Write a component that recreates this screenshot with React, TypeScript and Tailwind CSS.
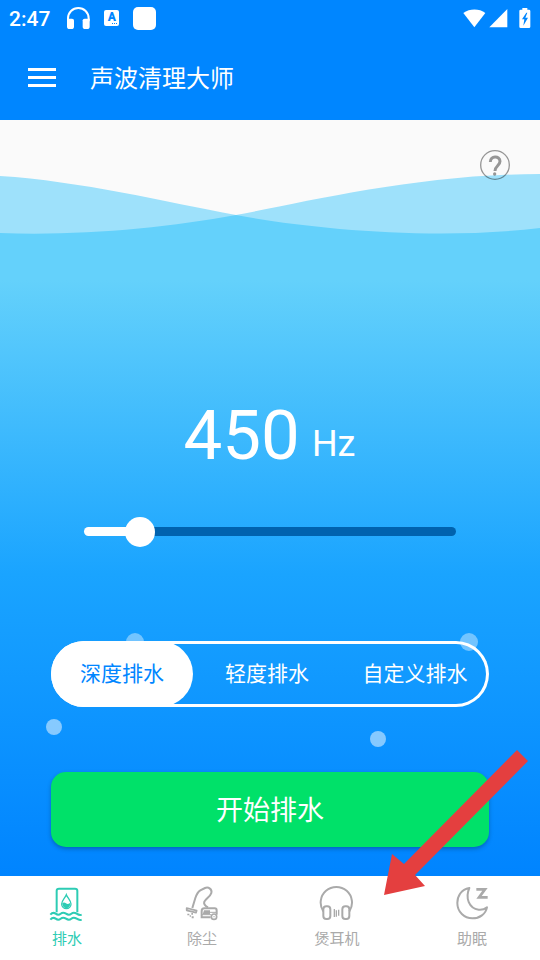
import { useState } from 'react';
import type { CSSProperties, ReactNode } from 'react';
import clsx from 'clsx';

const MAX_HZ = 3750;
const MODES = ['深度排水', '轻度排水', '自定义排水'];

function StatusBar() {
  return (
    <div className="flex h-9 items-center px-[9px]">
      <span className="pt-px text-[21px] font-medium leading-6">2:47</span>
      <svg className="ml-4 h-6 w-6" viewBox="0 0 72 72" fill="none">
        <path d="M6 46V37a31 31 0 0 1 62 0v9" stroke="white" strokeWidth="6" />
        <path d="M3 38h15q6 0 6 5v19q0 7-8 7h-5q-8 0-8-7z" fill="white" />
        <path d="M71 38H56q-6 0-6 5v19q0 7 8 7h5q8 0 8-7z" fill="white" />
      </svg>
      <span className="ml-[14px] flex h-4 w-[15px] flex-col items-center justify-center rounded-[2px] bg-white text-[12px] font-black leading-[12px] text-[#0086ff]">
        A
        <svg className="h-[2px] w-[7px] self-end" viewBox="0 0 7 2">
          <path d="M0 0h1v1H0zM2 0h1v1H2zM4 0h1v1H4z" fill="#0086ff" />
        </svg>
      </span>
      <span className="ml-[14px] h-[23px] w-[23px] rounded-[5px] bg-white" />
      <div className="ml-auto flex items-center">
        <svg className="h-[19px] w-[23px]" viewBox="0 0 69 57" fill="white">
          <path d="M34 55L1 12C20-2 49-2 67 12z" />
        </svg>
        <svg className="ml-[3px] h-[19px] w-[19px]" viewBox="0 0 57 57" fill="white">
          <path d="M1 55L55 0v55z" />
        </svg>
        <svg className="ml-[11px] h-[21px] w-[12px]" viewBox="0 0 36 63">
          <path d="M10 0h15v5h5q4 0 4 4v47q0 4-4 4H5q-4 0-4-4V9q0-4 4-4h5z" fill="white" />
          <path d="M22 14L9 34h7l-3 19 14-24h-8l6-15z" fill="#0086ff" />
        </svg>
      </div>
    </div>
  );
}

function Waves() {
  return (
    <svg className="block h-32 w-full bg-[#fafafa]" viewBox="0 0 540 128" preserveAspectRatio="none">
      <path d="M0 56C80 61 166 82 236 95S430 121 540 108V128H0z" fill="#9ee1fb" />
      <path d="M0 113C80 116 166 108 236 95S420 54 540 54V128H0z" fill="#9ee1fb" />
      <path d="M0 113C80 116 166 108 236 95C306 108 430 121 540 108V128H0z" fill="#64d1fb" />
    </svg>
  );
}

function DrainIcon() {
  return (
    <svg className="h-9 w-9" viewBox="57 15 108 108" fill="none" stroke="currentColor">
      <path d="M80 97V32q0-6 7-6h48q7 0 7 6v65" strokeWidth="6" />
      <path d="M109 44C105 54 95 62 95 72a14 14 0 0 0 28 0C123 62 113 54 109 44z" strokeWidth="4" />
      <path d="M97 69q6-3 11 1t12-1q2 14-11 16q-12-2-12-16z" fill="currentColor" stroke="none" />
      <path d="M61 104q8-9 16-3t15 0t16 0t16 0t16 0t15 3" strokeWidth="6" />
      <path d="M61 119q8-9 16-3t15 0t16 0t16 0t16 0t15 3" strokeWidth="6" />
    </svg>
  );
}

function DustIcon() {
  return (
    <svg className="h-9 w-9" viewBox="58 15 108 108" fill="none" stroke="currentColor">
      <path
        d="M83 84L92 54C96 42 99 36 107 31L121 24C132 20 143 28 140 39C137 50 123 56 119 65C116 73 122 78 130 82"
        strokeWidth="6"
      />
      <path d="M66 84l30 8-2 6-28-7z" strokeWidth="5" strokeLinejoin="round" />
      <path d="M68 101h6v5h-6zM80 99h5v5h-5zM81 109h6v6h-6zM75 106h4v4h-4z" fill="currentColor" stroke="none" />
      <path d="M138 112H111V93q0-8 8-8h31q6 0 6 7v12" strokeWidth="6" />
      <path d="M118 91h18v12H114z" fill="currentColor" stroke="none" />
      <path d="M136 97h18M111 104h28" strokeWidth="3" />
      <circle cx="148" cy="110" r="8" strokeWidth="5" />
      <circle cx="148" cy="110" r="2" fill="currentColor" stroke="none" />
    </svg>
  );
}

function HeadphoneIcon() {
  return (
    <svg className="h-9 w-9" viewBox="58 15 108 108" fill="none" stroke="currentColor">
      <path d="M71 94A47 47 0 1 1 149 94" strokeWidth="6" />
      <rect x="71" y="79" width="21" height="38" rx="9" strokeWidth="6" />
      <rect x="128" y="79" width="21" height="38" rx="9" strokeWidth="6" />
      <path d="M104 87v24M110 91v19M117 89v18" strokeWidth="4" />
    </svg>
  );
}

function SleepIcon() {
  return (
    <svg className="h-9 w-9" viewBox="58 15 108 108" fill="none" stroke="currentColor">
      <path
        d="M104 24C79 28 68 49 68 69C68 96 89 115 113 115C135 115 153 102 157 82C149 88 141 90 132 89C103 85 91 54 104 24z"
        strokeWidth="6"
        strokeLinejoin="round"
      />
      <path d="M125 28h26L133 52h26" strokeWidth="8" />
    </svg>
  );
}

function NavItem({ icon, label, active }: { icon: ReactNode; label: string; active?: boolean }) {
  return (
    <a
      href="#"
      className={clsx('flex flex-col items-center gap-1.5 pr-px pt-[9px]', active ? 'text-[#2dccb4]' : 'text-[#aaaaaa]')}
    >
      {icon}
      <span className="text-[15px] leading-6">{label}</span>
    </a>
  );
}

export default function App() {
  const [hz, setHz] = useState(450);
  const [mode, setMode] = useState(0);
  const fill = { '--fill': `${(hz / MAX_HZ) * 92 + 4}%` } as CSSProperties;

  return (
    <div className="relative flex min-h-screen flex-col bg-white font-[Roboto,'Noto_Sans_CJK_SC',sans-serif] text-white">
      <header className="bg-[#0086ff]">
        <StatusBar />
        <div className="flex h-[84px] items-center gap-[34px] px-7 pb-0.5">
          <button type="button" aria-label="菜单" className="flex w-7 flex-col gap-[5px]">
            <span className="h-[3px] w-full bg-white" />
            <span className="h-[3px] w-full bg-white" />
            <span className="h-[3px] w-full bg-white" />
          </button>
          <h1 className="pt-1 text-[24px] leading-8">声波清理大师</h1>
        </div>
      </header>

      <main className="relative flex flex-1 flex-col bg-[linear-gradient(to_bottom,#64d1fb_160px,#1aa4ff_60%,#0084ff)]">
        <Waves />
        <button type="button" aria-label="帮助" className="absolute right-[30px] top-[30px] text-black/40">
          <svg className="h-[30px] w-[30px]" viewBox="0 0 90 90" fill="none" stroke="currentColor">
            <circle cx="45" cy="45" r="43" strokeWidth="4" />
            <path d="M31 36C30 17 60 16 60 34C60 47 45 48 45 63" strokeWidth="9" />
            <circle cx="44" cy="72" r="5" fill="currentColor" stroke="none" />
          </svg>
        </button>

        <div className="flex flex-1 flex-col justify-end px-[51px] pb-[29px]">
          <div className="flex items-end justify-center gap-3 pr-px">
            <span className="text-[69px] leading-20">{hz}</span>
            <span className="text-[36px] leading-16">Hz</span>
          </div>

          <input
            type="range"
            aria-label="频率"
            min={0}
            max={MAX_HZ}
            value={hz}
            onChange={(e) => setHz(Number(e.target.value))}
            style={fill}
            className="mx-[33px] mt-10 h-[30px] appearance-none bg-transparent [&::-webkit-slider-runnable-track]:h-[9px] [&::-webkit-slider-runnable-track]:rounded-full [&::-webkit-slider-runnable-track]:bg-[linear-gradient(to_right,white_var(--fill),#0062ae_var(--fill))] [&::-webkit-slider-thumb]:-mt-[10px] [&::-webkit-slider-thumb]:h-[30px] [&::-webkit-slider-thumb]:w-[30px] [&::-webkit-slider-thumb]:appearance-none [&::-webkit-slider-thumb]:rounded-full [&::-webkit-slider-thumb]:bg-white"
          />

          <div className="relative mt-[95px]">
            {/* rising bubbles */}
            <span className="absolute -top-2 left-[75px] h-[18px] w-[18px] rounded-full bg-white/40" />
            <span className="absolute -top-2 right-[11px] h-[18px] w-[18px] rounded-full bg-white/40" />
            <span className="absolute -left-[5px] top-[78px] h-4 w-4 rounded-full bg-white/50" />
            <span className="absolute right-[103px] top-[90px] h-4 w-4 rounded-full bg-white/50" />
            <div
              role="tablist"
              className="relative grid h-[66px] grid-cols-[142px_1fr_1fr] rounded-full text-[21px] inset-ring-3 inset-ring-white"
            >
              {MODES.map((name, i) => (
                <button
                  key={name}
                  type="button"
                  role="tab"
                  aria-selected={i === mode}
                  onClick={() => setMode(i)}
                  className={clsx('rounded-full pt-0.5', i === mode && 'bg-white text-[#0086ff]')}
                >
                  {name}
                </button>
              ))}
            </div>
          </div>

          <button
            type="button"
            className="mt-[65px] h-[75px] rounded-[15px] bg-[#00e169] pt-1 text-[27px] shadow-[0_2px_4px_rgba(0,0,0,0.25)]"
          >
            开始排水
          </button>
        </div>
      </main>

      <nav className="grid h-[84px] grid-cols-4">
        <NavItem icon={<DrainIcon />} label="排水" active />
        <NavItem icon={<DustIcon />} label="除尘" />
        <NavItem icon={<HeadphoneIcon />} label="煲耳机" />
        <NavItem icon={<SleepIcon />} label="助眠" />
      </nav>

      <svg className="pointer-events-none absolute bottom-[65px] right-3 h-[145px] w-36" viewBox="0 0 144 145">
        <path d="M0 145L8 104L20 114L133 0L144 11L31 125L41 136z" fill="#e43f3f" />
      </svg>
    </div>
  );
}
